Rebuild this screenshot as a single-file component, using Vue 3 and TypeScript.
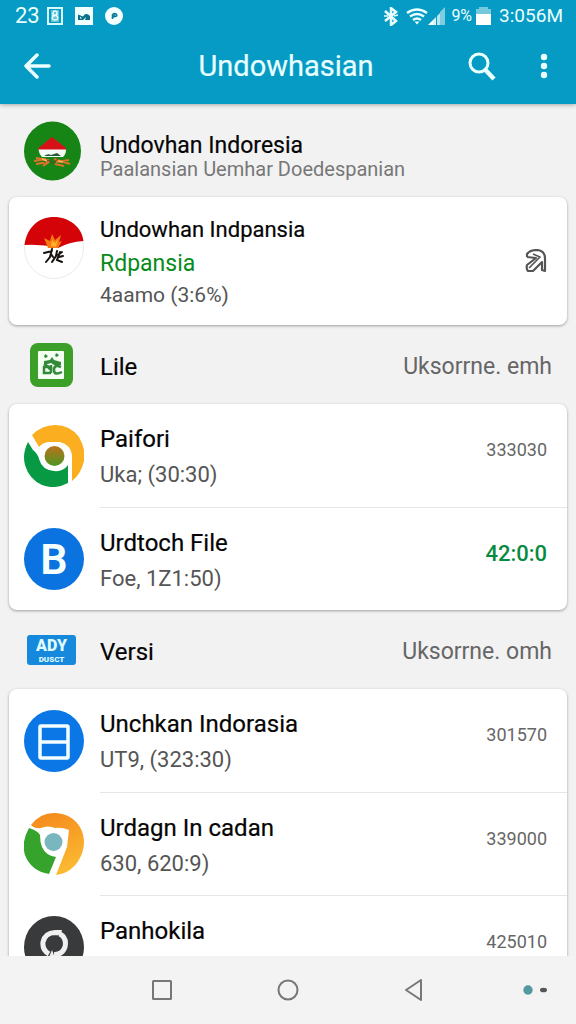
<script setup lang="ts">
interface Item {
  icon: 'swirl' | 'letter' | 'panel' | 'nine' | 'sync'
  title: string
  detail: string
  value: string
  accent?: boolean
}

interface Group {
  badge: 'note' | 'label'
  name: string
  note: string
  items: Item[]
}

const groups: Group[] = [
  {
    badge: 'note',
    name: 'Lile',
    note: 'Uksorrne. emh',
    items: [
      { icon: 'swirl', title: 'Paifori', detail: 'Uka; (30:30)', value: '333030' },
      { icon: 'letter', title: 'Urdtoch File', detail: 'Foe, 1Z1:50)', value: '42:0:0', accent: true },
    ],
  },
  {
    badge: 'label',
    name: 'Versi',
    note: 'Uksorrne. omh',
    items: [
      { icon: 'panel', title: 'Unchkan Indorasia', detail: 'UT9, (323:30)', value: '301570' },
      { icon: 'nine', title: 'Urdagn In cadan', detail: '630, 620:9)', value: '339000' },
      { icon: 'sync', title: 'Panhokila', detail: 'Idam, 03:40)', value: '425010' },
    ],
  },
]
</script>

<template>
  <div class="screen">
    <header class="top">
      <div class="status">
        <span class="count">23</span>
        <svg class="s1" width="16" height="18" viewBox="0 0 16 18" aria-hidden="true">
          <rect x="1" y="1" width="14" height="16" fill="none" stroke="#d8fbfb" stroke-width="2" />
          <rect x="4" y="3" width="8" height="12" fill="#66c4d8" />
          <path d="M6 4.500Q10 3 10 6T6 9Q4 13 8 13T10 9Q8 7 6 9V5" fill="none" stroke="#e8ffff" stroke-width="1.500" />
        </svg>
        <svg class="s2" width="18" height="18" viewBox="0 0 18 18" aria-hidden="true">
          <path d="M0 0H18V18H0Z" fill="#f2ffff" />
          <path d="M3 7.500L8 9.500Q11 5 15 9V13H10L11 10L8 13H3ZM5 9.500V11.500H7Z" fill="#086f8c" fill-rule="evenodd" />
        </svg>
        <svg class="s3" width="18" height="18" viewBox="0 0 18 18" aria-hidden="true">
          <circle cx="9" cy="9" r="9" fill="#f4ffff" />
          <path d="M7.500 12V7.500Q10 5.500 11.500 7.500T8 10L10 7.500" fill="none" stroke="#087a98" stroke-width="1.500" />
        </svg>
        <span class="spring"></span>
        <svg width="14" height="19" viewBox="0 0 14 19" fill="none" stroke="#eaffff" stroke-width="2.500" aria-hidden="true">
          <path d="M1 4L12 14L7 18V1L12 5L1 14" />
          <path d="M0 9H4M10 9L14 8" stroke-width="1.500" />
        </svg>
        <svg class="wifi" width="22" height="17" viewBox="0 0 22 17" fill="none" stroke="#eaffff" stroke-width="2.500" aria-hidden="true">
          <path d="M1 5Q11 -2 21 5M4 8.500Q11 3.500 18 8.500M7 12Q11 9 15 12" />
          <path d="M8.500 13.500H13.500L11 16.500Z" fill="#eaffff" stroke="none" />
        </svg>
        <svg width="17" height="18" viewBox="0 0 17 18" aria-hidden="true">
          <path d="M0 18L5 13V18Z" fill="#fff" />
          <path d="M5 13L8 10V18H5Z" fill="#d5f4f8" />
          <path d="M9 9L12 6V18H9Z" fill="#b8e6ef" />
          <path d="M12 5L17 0V18H12Z" fill="#80cde0" />
        </svg>
        <span class="percent">9%</span>
        <svg class="battery" width="15" height="18" viewBox="0 0 15 18" aria-hidden="true">
          <path d="M3 0H12V2H15V8H0V2H3Z" fill="#76c9dc" />
          <path d="M0 7H15V18H0Z" fill="#fff" />
        </svg>
        <span class="clock">3:056M</span>
      </div>
      <div class="toolbar">
        <button class="tool" type="button" aria-label="Back">
          <svg width="27" height="26" viewBox="0 0 27 26" fill="none" stroke="#eaffff" stroke-width="3.500" stroke-linecap="round" stroke-linejoin="round">
            <path d="M13 2L2 13L13 24M2 13H25" />
          </svg>
        </button>
        <h1>Undowhasian</h1>
        <div class="tools">
          <button class="tool" type="button" aria-label="Search">
            <svg width="28" height="29" viewBox="0 0 28 29" fill="none" stroke="#eaffff">
              <circle cx="11" cy="11" r="9" stroke-width="3" />
              <path d="M17.500 18L26 27" stroke-width="4.500" />
            </svg>
          </button>
          <button class="tool" type="button" aria-label="More options">
            <svg width="8" height="26" viewBox="0 0 8 26" fill="#eaffff">
              <circle cx="4" cy="4" r="3.200" /><circle cx="4" cy="13" r="3.200" /><circle cx="4" cy="22" r="3.200" />
            </svg>
          </button>
        </div>
      </div>
    </header>

    <main class="list">
      <section class="intro">
        <svg class="icon" viewBox="0 0 60 60" aria-hidden="true">
          <ellipse cx="28.500" cy="30" rx="28.500" ry="29.500" fill="#168516" />
          <path d="M14.500 27L28 16L42 27V30H14.500Z" fill="#d51218" />
          <path d="M14.500 28.500H42Q42 33 39 36H18Q15 33 14.500 28.500Z" fill="#f5fbf5" />
          <path d="M20 35Q24 32 27 34L33 32L37 35Z" fill="#275b38" />
          <path d="M12 37L25 39M10 40L22 38M12 43L25 41L19 45M30 38L46 43M32 41L45 39M31 43L40 45" stroke="#df7229" stroke-width="2" fill="none" />
          <path d="M20 42L24 39L29 42L34 38" stroke="#71402a" stroke-width="1" fill="none" />
          <path d="M18 38L23 40M34 40L39 41" stroke="#f4ba54" stroke-width="1.500" />
        </svg>
        <div class="intro-text">
          <h2>Undovhan Indoresia</h2>
          <p>Paalansian Uemhar Doedespanian</p>
        </div>
      </section>

      <article class="card feature">
        <svg class="icon" viewBox="0 0 60 62" aria-hidden="true">
          <ellipse cx="30" cy="31" rx="29.500" ry="30.500" fill="#fff" stroke="#ebebeb" />
          <path d="M0.500 28C3 10 15 0 30 0S58 10 59.500 24Q45 25 34 31Q18 27 0.500 28Z" fill="#d30308" />
          <path d="M24 31L20 21L26 24L28 17L31 23L37 18L35 25L38 24L34 31Z" fill="#f57a12" />
          <path d="M27 29L28 23L31 26L34 22L32 30Z" fill="#ffb02e" />
          <path d="M20 36L28 34M28 32L26 40L22 45M27 37L29 40M33 34L32 39L28 45M34 38L38 35M36 35L33 43L38 45M35 40L39 39" fill="none" stroke="#17120f" stroke-width="2" stroke-linecap="round" />
        </svg>
        <div class="feature-text">
          <h3>Undowhan Indpansia</h3>
          <p class="highlight">Rdpansia</p>
          <p>4aamo (3:6%)</p>
        </div>
        <button class="share" type="button" aria-label="Open">
          <svg width="22" height="24" viewBox="0 0 22 24" fill="none" stroke="#555" stroke-width="2.200" stroke-linejoin="round">
            <path d="M2 8V5Q5 1 12 1Q20 2 20 9V22L17 21V13L8 22H3Q1 20 2 16L11 9L2 8" />
            <path d="M8 5L15 8L4 19" stroke-width="1.600" />
          </svg>
        </button>
      </article>

      <template v-for="group in groups" :key="group.name">
        <div class="section-head">
          <span class="badge">
            <svg v-if="group.badge === 'note'" width="43" height="44" viewBox="0 0 43 44" aria-hidden="true">
              <rect width="43" height="44" rx="8" fill="#3c9f27" />
              <rect x="8" y="8" width="26" height="28" rx="1" fill="#f3fff0" />
              <path d="M15 11L18 13L16 15L14 14ZM26 10L29 12L27 14L25 13ZM14 18L20 17L22 14L24 17L31 19V22H24L21 20L14 22Z" fill="#34883a" />
              <path d="M14 21L19 24H14V30H20Q23 26 18 25M31 24Q24 21 24 27T32 29M21 22V30" fill="none" stroke="#34883a" stroke-width="2.500" />
            </svg>
            <svg v-else width="49" height="30" viewBox="0 0 49 30" aria-hidden="true">
              <rect width="49" height="30" rx="3" fill="#1689dd" />
              <text x="24.500" y="16" text-anchor="middle" class="label-big">ADY</text>
              <text x="24.500" y="27" text-anchor="middle" class="label-small">DUSCT</text>
            </svg>
          </span>
          <h2>{{ group.name }}</h2>
          <span class="note">{{ group.note }}</span>
        </div>

        <ul class="card">
          <li v-for="item in group.items" :key="item.title" class="row">
            <svg v-if="item.icon === 'swirl'" class="icon" viewBox="0 0 60 62" aria-hidden="true">
              <path d="M8 10Q18 0 31 0Q46 0 55 12Q62 24 60 36Q57 49 48 56V30Q47 20 36 17H24Q18 18 15 22Z" fill="#faae20" />
              <path d="M4 17Q-2 29 1 40Q5 54 18 60Q31 65 44 58V40Q39 47 30 46Q18 45 15 34Q14 29 9 25Z" fill="#079944" />
              <circle cx="30.500" cy="31" r="10" fill="url(#core)" />
              <defs>
                <linearGradient id="core" x1="0" y1="0" x2="0" y2="1">
                  <stop offset="0" stop-color="#bd711d" />
                  <stop offset="1" stop-color="#4d9721" />
                </linearGradient>
              </defs>
            </svg>
            <svg v-else-if="item.icon === 'letter'" class="icon" viewBox="0 0 60 62" aria-hidden="true">
              <ellipse cx="30" cy="31" rx="30" ry="31" fill="#0b73df" />
              <text x="30" y="46" text-anchor="middle" class="letter">B</text>
            </svg>
            <svg v-else-if="item.icon === 'panel'" class="icon" viewBox="0 0 60 62" aria-hidden="true">
              <ellipse cx="30" cy="31" rx="30" ry="31" fill="#0b76e5" />
              <rect x="16" y="16" width="28" height="32" rx="1" fill="none" stroke="#f3ffff" stroke-width="3.500" />
              <path d="M16 32H44" stroke="#f3ffff" stroke-width="3.500" />
            </svg>
            <svg v-else-if="item.icon === 'nine'" class="icon" viewBox="0 0 60 62" aria-hidden="true">
              <defs>
                <linearGradient id="amber" x1="0" y1="0" x2="0.300" y2="1">
                  <stop offset="0" stop-color="#f4881b" />
                  <stop offset="1" stop-color="#fbb831" />
                </linearGradient>
              </defs>
              <path d="M7 12Q16 0 30 0Q47 0 56 14Q64 29 56 45Q48 60 32 62L43 34L45 17Q38 14 31 15Q24 12 17 15Q11 16 7 12Z" fill="url(#amber)" />
              <path d="M5 15Q-3 29 1 42Q7 58 25 61L32 44Q22 43 18 34Q16 29 16 22Q14 18 5 15Z" fill="#35a32c" />
              <circle cx="29.500" cy="29" r="9" fill="#79b6bd" />
            </svg>
            <svg v-else class="icon" viewBox="0 0 60 62" aria-hidden="true">
              <ellipse cx="30" cy="31" rx="30" ry="31" fill="#393a3b" />
              <path d="M25 38Q18 34 19 26Q21 17 31 16.500L35 17M36 18Q43 22 41 31Q38 39 30 38.500" fill="none" stroke="#f0f0f0" stroke-width="5" />
              <path d="M32 14L38 14L36 21ZM28 34L31 42L25 41Z" fill="#f0f0f0" />
            </svg>
            <div class="row-body">
              <div class="row-text">
                <h3>{{ item.title }}</h3>
                <p>{{ item.detail }}</p>
              </div>
              <span class="value" :class="{ accent: item.accent }">{{ item.value }}</span>
            </div>
          </li>
        </ul>
      </template>
    </main>

    <nav class="nav" aria-label="System">
      <span></span>
      <button type="button" aria-label="Recent apps">
        <svg width="20" height="20" viewBox="0 0 20 20" fill="none" stroke="#777" stroke-width="2"><rect x="1" y="1" width="18" height="18" rx="0.500" /></svg>
      </button>
      <button type="button" aria-label="Home">
        <svg width="22" height="22" viewBox="0 0 22 22" fill="none" stroke="#777" stroke-width="2"><circle cx="11" cy="11" r="9.500" /></svg>
      </button>
      <button type="button" aria-label="Back">
        <svg width="20" height="22" viewBox="0 0 20 22" fill="none" stroke="#777" stroke-width="2" stroke-linejoin="round"><path d="M17 1V21L2 11Z" /></svg>
      </button>
      <span class="dots">
        <svg width="25" height="10" viewBox="0 0 25 10" aria-hidden="true">
          <circle cx="5" cy="5" r="4.700" fill="#5298a0" />
          <ellipse cx="20.500" cy="5" rx="3.500" ry="2.300" fill="#555" />
        </svg>
      </span>
    </nav>
  </div>
</template>

<style>
body {
  margin: 0;
}
</style>

<style scoped>
.screen {
  display: flex;
  flex-direction: column;
  height: 100vh;
  overflow: hidden;
  background: #f2f2f3;
  color: #050505;
  font-family: Roboto, 'Liberation Sans', sans-serif;
}
h1, h2, h3, p, ul {
  margin: 0;
  padding: 0;
  font-weight: 400;
}
svg {
  display: block;
  flex: none;
}
button {
  display: flex;
  align-items: center;
  justify-content: center;
  padding: 0;
  border: 0;
  background: none;
  cursor: pointer;
}
.top {
  position: relative;
  flex: none;
  padding-bottom: 4px;
  background: #059bc4;
  color: #eaffff;
  box-shadow: 0 1px 4px rgba(0, 0, 0, 0.3);
}
.status {
  display: flex;
  align-items: center;
  height: 32px;
  padding: 0 13px 0 15px;
  font-size: 19px;
  line-height: 32px;
}
.count {
  width: 32px;
  font-size: 22px;
}
.s2 {
  margin-left: 12px;
}
.s3 {
  margin-left: 12px;
}
.spring {
  flex: 1;
}
.wifi {
  margin-left: 8px;
}
.percent {
  margin-left: 6px;
  font-size: 16px;
}
.battery {
  margin: 0 8px 0 4px;
}
.toolbar {
  display: grid;
  grid-template-columns: 1fr auto 1fr;
  align-items: center;
  height: 68px;
  padding: 0 20px 0 16px;
}
.toolbar h1 {
  font-size: 29px;
  line-height: 36px;
  -webkit-text-stroke: 0.2px currentColor;
}
.tool {
  justify-self: start;
  min-width: 24px;
  height: 48px;
  padding: 0 8px;
}
.tools {
  display: flex;
  justify-content: flex-end;
  gap: 28px;
}
.list {
  flex: 1;
  min-height: 0;
  overflow-y: auto;
  scrollbar-width: none;
}
.icon {
  width: 60px;
  height: 62px;
}
.intro {
  display: flex;
  align-items: center;
  gap: 16px;
  height: 93px;
  padding: 0 24px;
}
.intro-text {
  padding-top: 12px;
}
h2, h3 {
  font-size: 23px;
  line-height: 30px;
  -webkit-text-stroke: 0.2px currentColor;
}
.intro-text h2 {
  line-height: 24px;
}
p {
  color: #555;
  font-size: 22px;
  line-height: 30px;
}
.intro-text p {
  color: #777;
  font-size: 20px;
  line-height: 22px;
}
.card {
  margin: 0 9px;
  border-radius: 8px;
  background: #fff;
  box-shadow: 0 1px 3px rgba(0, 0, 0, 0.35);
  list-style: none;
}
.feature {
  display: flex;
  align-items: flex-start;
  gap: 16px;
  padding: 16px 20px 16px 15px;
}
.feature .icon {
  margin-top: 4px;
}
.feature-text {
  flex: 1;
}
.feature-text h3 {
  font-size: 22px;
  line-height: 34px;
}
.feature-text .highlight {
  color: #078b1b;
  font-size: 23px;
  line-height: 34px;
}
.feature-text p {
  font-size: 21px;
  line-height: 28px;
}
.share {
  align-self: center;
}
.section-head {
  display: flex;
  align-items: center;
  height: 79px;
  padding: 0 24px;
}
.badge {
  display: flex;
  justify-content: center;
  width: 54px;
  margin-right: 22px;
}
.section-head h2 {
  flex: 1;
  padding-top: 4px;
  font-size: 24px;
}
.note {
  padding-top: 4px;
  color: #666;
  font-size: 23px;
  line-height: 30px;
}
.row {
  display: flex;
  align-items: center;
  gap: 16px;
  padding-left: 15px;
}
.row-body {
  display: flex;
  flex: 1;
  box-sizing: border-box;
  height: 103px;
  padding: 20px 20px 0 0;
}
.row + .row .row-body {
  border-top: 1px solid #e6e6e6;
}
.row-text {
  display: grid;
  flex: 1;
  align-content: start;
  gap: 6px;
}
.row-text h3 {
  font-size: 24px;
}
.value {
  color: #666;
  font-size: 18px;
  line-height: 52px;
}
.value.accent {
  color: #078b40;
  font-size: 22px;
  font-weight: 500;
}
.letter {
  fill: #f5ffff;
  font-size: 43px;
  font-weight: 600;
}
.label-big {
  fill: #dffaff;
  font-size: 16px;
  font-weight: 900;
}
.label-small {
  fill: #dffaff;
  font-size: 8px;
  font-weight: 900;
}
.nav {
  display: grid;
  flex: none;
  grid-template-columns: 1fr 126px 126px 126px 1fr;
  align-items: center;
  height: 68px;
  background: #f3f3f4;
}
.nav button {
  height: 48px;
}
.dots {
  justify-self: end;
  padding-right: 28px;
}
</style>
